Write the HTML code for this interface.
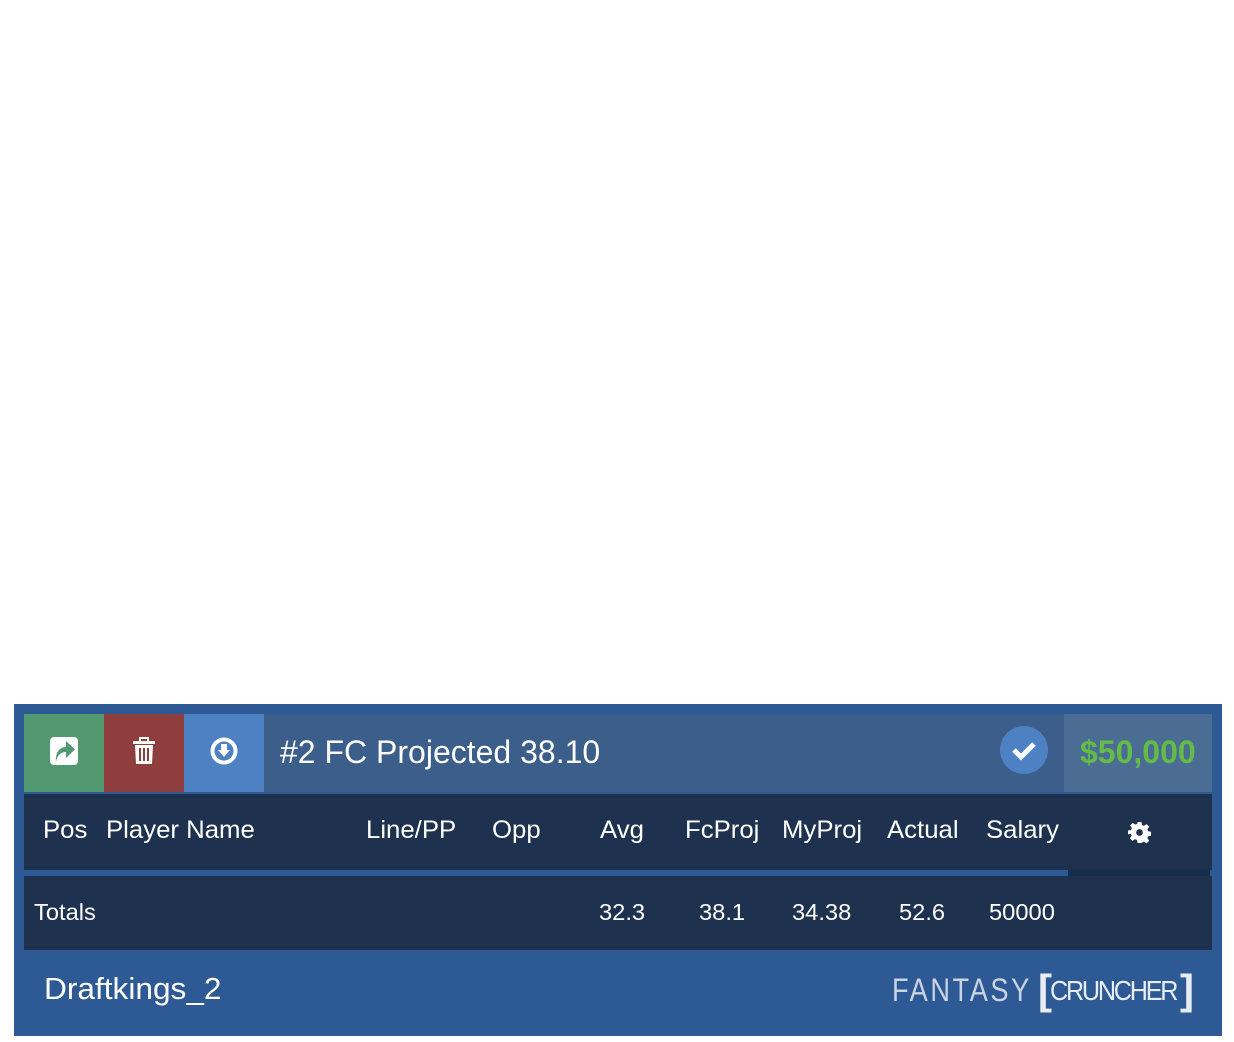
<!DOCTYPE html>
<html><head><style>
body{margin:0;width:1234px;height:1042px;background:#fff;font-family:"Liberation Sans",sans-serif;position:relative;overflow:hidden}
.a{position:absolute}
.t{position:absolute;color:#fff;white-space:nowrap}
.h{transform:scaleX(1.03);transform-origin:left}
</style></head><body>
<div class="a" style="left:14px;top:704px;width:1208px;height:332px;background:#2d5a94"></div>
<div class="a" style="left:24px;top:714px;width:1188px;height:78px;background:#3c5e8a"></div>
<div class="a" style="left:24px;top:714px;width:80px;height:78px;background:#529870"></div>
<div class="a" style="left:104px;top:714px;width:80px;height:78px;background:#8e3e3c"></div>
<div class="a" style="left:184px;top:714px;width:80px;height:78px;background:#4e81c4"></div>
<div class="a" style="left:1064px;top:714px;width:148px;height:78px;background:#4c6d93"></div>
<svg class="a" style="left:50px;top:737px" width="28" height="28" viewBox="0 0 28 28"><rect x="0" y="0" width="28" height="28" rx="4" fill="#fff"/><path d="M6 25 C5 15 10 10 16 10 L16 4 L25 12.5 L16 21 L16 15 C11 15 7 18 6 25Z" fill="#529870"/></svg>
<svg class="a" style="left:133px;top:737px" width="22" height="28" viewBox="0 0 22 28"><rect x="0" y="4" width="22" height="3" fill="#fff"/><rect x="7" y="1" width="8" height="4" fill="none" stroke="#fff" stroke-width="2"/><path d="M2 8 H20 L19 27 H3Z" fill="#fff"/><rect x="6" y="11" width="2" height="13" fill="#8e3e3c"/><rect x="10" y="11" width="2" height="13" fill="#8e3e3c"/><rect x="14" y="11" width="2" height="13" fill="#8e3e3c"/></svg>
<svg class="a" style="left:210px;top:737px" width="28" height="28" viewBox="0 0 28 28"><circle cx="14" cy="14" r="11.5" fill="none" stroke="#fff" stroke-width="4"/><path d="M11 7 H17 V13 H20 L14 20 L8 13 H11Z" fill="#fff"/></svg>
<div class="t" style="left:280px;top:734px;font-size:32px">#2 FC Projected 38.10</div>
<svg class="a" style="left:1000px;top:726px" width="48" height="48" viewBox="0 0 48 48"><circle cx="24" cy="24" r="24" fill="#4e81c4"/><path d="M14 24 L21 31 L34 18" fill="none" stroke="#fff" stroke-width="5"/></svg>
<div class="t" style="left:1080px;top:734px;font-size:32px;font-weight:bold;color:#63bb48">$50,000</div>
<div class="a" style="left:24px;top:794px;width:1188px;height:76px;background:#1e3250"></div>
<div class="a" style="left:24px;top:870px;width:1044px;height:6px;background:#2d5a94"></div>
<div class="a" style="left:1068px;top:870px;width:142px;height:6px;background:#152c4a"></div>
<div class="a" style="left:24px;top:876px;width:1188px;height:74px;background:#1e3250"></div>
<div class="t h" style="top:816px;font-size:25px;left:43px">Pos</div>
<div class="t h" style="top:816px;font-size:25px;left:106px">Player Name</div>
<div class="t h" style="top:816px;font-size:25px;left:366px">Line/PP</div>
<div class="t h" style="top:816px;font-size:25px;left:492px">Opp</div>
<div class="t h" style="top:816px;font-size:25px;left:600px">Avg</div>
<div class="t h" style="top:816px;font-size:25px;left:685px">FcProj</div>
<div class="t h" style="top:816px;font-size:25px;left:782px">MyProj</div>
<div class="t h" style="top:816px;font-size:25px;left:887px">Actual</div>
<div class="t h" style="top:816px;font-size:25px;left:986px">Salary</div>
<svg class="a" style="left:1128px;top:821px" width="23" height="23" viewBox="0 0 24 24"><path fill="#fff" d="M10 1h4l.6 3.2 2 .9 2.7-1.9 2.8 2.8-1.9 2.7.9 2 3.2.6v4l-3.2.6-.9 2 1.9 2.7-2.8 2.8-2.7-1.9-2 .9L14 23h-4l-.6-3.2-2-.9-2.7 1.9-2.8-2.8 1.9-2.7-.9-2L0 14v-4l3.2-.6.9-2L2.2 4.7 5 1.9l2.7 1.9 2-.9z"/><circle cx="12" cy="12" r="3.5" fill="#1e3250"/></svg>
<div class="t h" style="top:899px;font-size:23px;left:34px">Totals</div>
<div class="t h" style="top:899px;font-size:23px;left:599px">32.3</div>
<div class="t h" style="top:899px;font-size:23px;left:699px">38.1</div>
<div class="t h" style="top:899px;font-size:23px;left:792px">34.38</div>
<div class="t h" style="top:899px;font-size:23px;left:899px">52.6</div>
<div class="t h" style="top:899px;font-size:23px;left:989px">50000</div>
<div class="t" style="top:971px;font-size:31px;left:44px;transform:scaleX(1.02);transform-origin:left">Draftkings_2</div>
<div class="t" style="top:972px;left:892px;font-size:32px;color:#c9d3e2;letter-spacing:3px;transform:scaleX(0.85);transform-origin:left">FANTASY</div>
<div class="t" style="top:966px;left:1038px;font-size:42px;color:#e8edf4;font-weight:bold">[</div>
<div class="t" style="top:975px;left:1050px;font-size:28px;color:#e8edf4;letter-spacing:-2.5px;transform:scaleX(0.9);transform-origin:left">CRUNCHER</div>
<div class="t" style="top:966px;left:1180px;font-size:42px;color:#e8edf4;font-weight:bold">]</div>
</body></html>
